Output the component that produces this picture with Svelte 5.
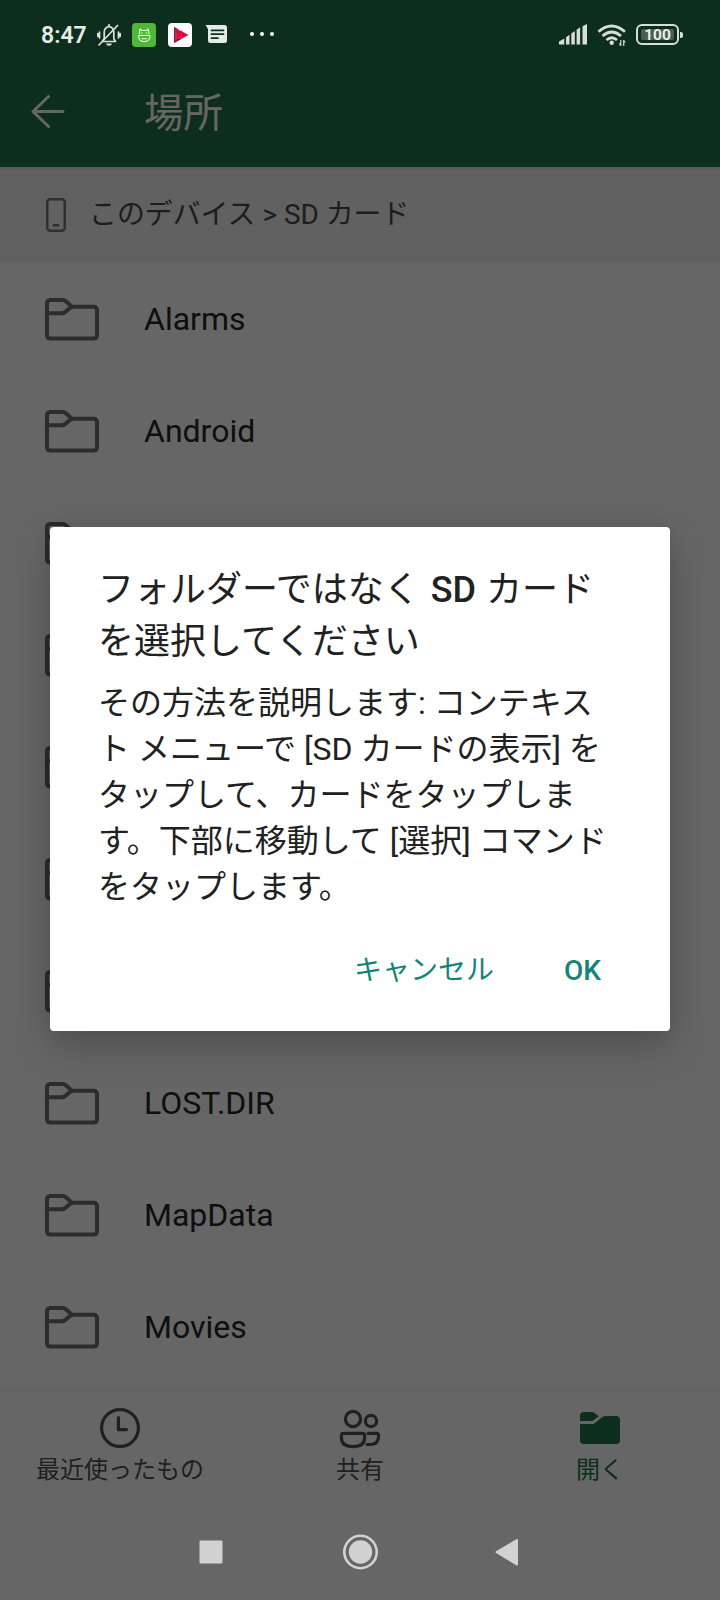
<script lang="ts">
  const folders = [
    "Alarms",
    "Android",
    "Audiobooks",
    "DCIM",
    "Documents",
    "Download",
    "Fonts",
    "LOST.DIR",
    "MapData",
    "Movies",
  ];

  interface Tab {
    key: string;
    label: string;
  }

  const tabs: Tab[] = [
    { key: "recent", label: "最近使ったもの" },
    { key: "shared", label: "共有" },
    { key: "open", label: "開く" },
  ];

  let active = $state("open");
  let dialogOpen = $state(true);
</script>

<div class="screen" lang="ja">
  <header class="app-bar">
    <svg class="back" width="34" height="34" viewBox="0 0 34 34">
      <path d="M32 16.500H2M17.500 1.500L2 16.500l15.500 15" />
    </svg>
    <h1>場所</h1>
  </header>

  <div class="crumbs">
    <svg width="20" height="34" viewBox="0 0 20 34">
      <rect x="1.250" y="1.250" width="17.500" height="31.500" rx="3" />
      <path d="M8 27.300h4" />
    </svg>
    <span>このデバイス &gt; SD カード</span>
  </div>

  <main class="list">
    {#each folders as name}
      <div class="row">
        <svg width="54" height="43" viewBox="0 0 54 43">
          <path d="M5.500 2H18q1.200 0 2.200 .8L27 8.700h21.500q3.500 0 3.500 3.500V37q0 3.500-3.500 3.500h-43Q2 40.500 2 37V5.500Q2 2 5.500 2z" />
          <path d="M2 15.200h16.500L27 8.700" />
        </svg>
        <span>{name}</span>
      </div>
    {/each}
  </main>

  <nav class="tabs">
    {#each tabs as tab}
      <button class="tab" class:active={tab.key === active} onclick={() => (active = tab.key)}>
        <svg width="42" height="42" viewBox="0 0 42 42">
          {#if tab.key === "recent"}
            <circle cx="21" cy="21" r="18.400" />
            <path d="M19.400 10.500v12.200h8" />
          {:else if tab.key === "shared"}
            <circle cx="14" cy="12" r="7.600" />
            <circle cx="32" cy="14" r="5.600" />
            <path d="M4.600 26.400h19q2 0 2 2.300v2q0 8.900-11.600 8.900T2.400 30.700v-2q0-2.300 2.200-2.300z" />
            <path d="M29 26.400h8.400q2.200 0 2.200 2.300 0 8.800-8.600 8.800h-3" />
          {:else}
            <path class="solid" d="M1 9.500Q1 5 5 5h7.500q2 0 3.200 .9l4 3.400-4.400 3.500q-1.400 1.200-3 1.200H1zM1 17h12.500q1.500 0 2.600-.9l6.500-5.500q1.900-1.600 3.900-1.600H37q4 0 4 4v20q0 4-4 4H5q-4 0-4-4z" />
          {/if}
        </svg>
        <span>{tab.label}</span>
      </button>
    {/each}
  </nav>

  <footer class="system-nav">
    <svg width="36" height="36" viewBox="0 0 36 36"><rect x="6.500" y="6.500" width="23" height="23" rx="1" /></svg>
    <svg width="38" height="36" viewBox="0 0 38 36">
      <circle cx="20.500" cy="18" r="11.700" />
      <circle class="ring" cx="20.500" cy="18" r="16.200" />
    </svg>
    <svg width="36" height="36" viewBox="0 0 36 36"><path d="M7 17.200L27.200 5.300q1.800-.9 1.800 .7v24.500q0 1.600-1.800 .7L7 19q-1.200-.9 0-1.800z" /></svg>
  </footer>

  <div class="scrim"></div>

  <div class="status-bar">
    <span class="time">8:47</span>
    <svg class="bell" width="24" height="24" viewBox="0 0 24 24">
      <path d="M5.500 18.500h13l-1.700-3V9.500q0-5-4.800-6-4.800 1-4.800 6v6zM12 3.500V1.500M2.500 9v6M.8 10.500v3M21.500 9v6M23.200 10.500v3" />
      <path d="M2 22L20.500 2.500" />
      <path class="clapper" d="M9 20.500h6q-.5 2.200-3 2.200t-3-2.200z" />
    </svg>
    <svg class="green-app" width="24" height="24" viewBox="0 0 24 24">
      <rect width="24" height="24" rx="4" fill="#50b839" stroke="none" />
      <path d="M7.500 11V8.500L8 6l2 1.500h4.500L16 6l.8 2.500V11M6.500 12.500h11.500v1q-.5 5-5.750 5t-5.750-5z" />
      <path d="M9.700 10h.6M14 10h.6M10 15.700h4.500" />
    </svg>
    <svg class="play-app" width="24" height="24" viewBox="0 0 24 24">
      <rect width="24" height="24" rx="4" fill="#fff" />
      <path d="M6 4l14.500 8L6 20z" fill="#e5093b" />
      <path d="M6 4l4 2.200v2L6 20z" fill="#8e1746" />
      <path d="M6 20l4.500-5.500 4 .8z" fill="#6d2350" />
      <path d="M8 7v9M11 7.500h3M11 15h3" stroke="#f790a5" stroke-width=".7" stroke-dasharray="1 1.500" />
    </svg>
    <svg class="chat" width="23" height="20" viewBox="0 0 23 20">
      <path d="M.5 1H19.500q2.500 0 2.500 2.500v13q0 2.500-2.500 2.500h-14q-2.500 0-2.500-2.500V5z" fill="#e4eae6" />
      <path d="M6.500 6.300h12M6.500 10.200h12M6.500 14.100h6.500" stroke="#0f2e1e" stroke-width="1.800" />
    </svg>
    <svg class="dots" width="26" height="6" viewBox="0 0 26 6">
      <circle cx="3" cy="3" r="2" />
      <circle cx="13" cy="3" r="2" />
      <circle cx="23" cy="3" r="2" />
    </svg>

    <svg class="signal" width="29" height="21" viewBox="0 0 29 21">
      <path d="M0 20.500v-3l5.300-3v6zM7 20.500v-7.200l3.500-2.500v9.700zM12.300 20.500V9.500L15.800 7v13.500zM17.600 20.500V5.700l3.500-2.400v17.200zM23.500 20.500V2.300L28 0v20.500z" />
    </svg>
    <svg class="wifi" width="30" height="23" viewBox="0 0 30 23">
      <path d="M1.500 7.700q13-11.500 26.500 0M5.500 12q9.200-8 18.500 0M9.500 16q5.200-4.500 10.500 0" />
      <circle cx="14.700" cy="18.700" r="2.200" />
      <path class="traffic" d="M23.800 16v6M22.300 19.500l1.500 2M26.700 16v6M28.200 18.500l-1.500-2" />
    </svg>
    <div class="battery"><span>100</span></div>
  </div>

  {#if dialogOpen}
    <div class="dialog" role="dialog" aria-modal="true">
      <h2>フォルダーではなく <b>SD</b> カード<br />を選択してください</h2>
      <p>
        その方法を説明します: コンテキス<br />ト メニューで [SD カードの表示] を<br />タップして、カードをタップしま<br />す。下部に移動して [選択] コマンド<br />をタップします。
      </p>
      <div class="actions">
        <button onclick={() => (dialogOpen = false)}>キャンセル</button>
        <button class="ok" onclick={() => (dialogOpen = false)}>OK</button>
      </div>
    </div>
  {/if}
</div>

<style>
  :global(body) { background: #666; }
  .screen { position: relative; display: flex; flex-direction: column; width: 720px; height: 1600px; overflow: hidden; background: #fff; font-family: Roboto, "Noto Sans CJK JP", sans-serif; }
  svg { display: block; flex: none; fill: none; stroke-linecap: round; stroke-linejoin: round; }
  h1, h2, p { margin: 0; font-weight: 400; }
  button { border: 0; padding: 0; background: none; font: inherit; }

  .app-bar { flex: none; box-sizing: border-box; height: 167px; padding: 56px 0 0 31px; display: flex; align-items: center; gap: 79px; background: #217346; color: #fff; box-shadow: 0 1px 4px rgba(0, 0, 0, 0.15); z-index: 1; }
  .app-bar h1 { padding-top: 5px; font-size: 39.500px; line-height: 58px; }
  .back { stroke: #fff; stroke-width: 3; }

  .crumbs { flex: none; height: 96px; padding-left: 46px; display: flex; align-items: center; gap: 23px; background: #f3f3f3; color: #4a4a4a; font-size: 27.900px; line-height: 40px; }
  .crumbs svg { stroke: #777; stroke-width: 2.500; }

  .list { flex: none; height: 1129px; overflow: hidden; }
  .row { height: 112px; padding-left: 45px; display: flex; align-items: center; gap: 45px; color: #262626; font-size: 32px; }
  .row svg { stroke: #6e6e6e; stroke-width: 4; }

  .tabs { flex: none; height: 112px; display: grid; grid-template-columns: repeat(3, 1fr); background: #fff; box-shadow: 0 -2px 7px rgba(0, 0, 0, 0.06); }
  .tab { display: flex; flex-direction: column; align-items: center; padding-top: 15px; gap: 3px; color: #505050; font-size: 24px; line-height: 36px; white-space: nowrap; }
  .tab svg { stroke: #505050; stroke-width: 3.200; }
  .tab.active { color: #217346; }
  .solid { fill: #217346; stroke: none; }

  .system-nav { position: relative; z-index: 3; box-sizing: border-box; height: 96px; display: flex; align-items: center; justify-content: center; gap: 111px; padding: 0 3px 0 0; background: #666; }
  .system-nav svg { fill: #d2d2d2; }
  .system-nav .ring { fill: none; stroke: #d2d2d2; stroke-width: 2.600; }

  .scrim { position: absolute; inset: 0; z-index: 2; background: rgba(0, 0, 0, 0.6); }

  .status-bar { position: absolute; top: 0; left: 0; right: 0; z-index: 3; box-sizing: border-box; height: 69px; display: flex; align-items: center; padding: 0 41px 0 41px; color: #e6ece8; }
  .time { width: 56px; padding-top: 1px; font-size: 23px; font-weight: 600; }
  .bell { stroke: #dbe2dd; stroke-width: 1.700; }
  .clapper { fill: #dbe2dd; stroke: none; }
  .green-app { margin-left: 11px; stroke: #e9f7e4; stroke-width: 1.100; }
  .play-app { margin-left: 12px; }
  .chat { margin: 0 0 2px 13px; }
  .dots { margin: 0 0 1px 21px; fill: #fff; }
  .signal { margin-left: auto; fill: #d5ded9; }
  .wifi { margin: 2px 9px 0 9px; stroke: #d5ded9; stroke-width: 2.800; stroke-linecap: butt; }
  .wifi circle { fill: #d5ded9; stroke: none; }
  .wifi .traffic { stroke-width: 1.200; }
  .battery { position: relative; box-sizing: border-box; width: 43px; height: 21px; padding: 3px 3px; border: 2px solid #d5ded9; border-radius: 6px; }
  .battery::after { content: ""; position: absolute; left: 42px; top: 5.500px; width: 2.500px; height: 6px; border-radius: 0 2px 2px 0; background: #d5ded9; }
  .battery span { display: block; height: 11px; border-radius: 2px; background: #486052; color: #eef3f0; font-size: 15.500px; line-height: 12px; font-weight: 600; text-align: center; }

  .dialog { position: absolute; left: 50px; top: 527px; z-index: 4; box-sizing: border-box; width: 620px; height: 504px; padding: 37px 49px 0 48px; border-radius: 4px; background: #fff; color: #212121; box-shadow: 0 16px 40px rgba(0, 0, 0, 0.22), 0 0 16px rgba(0, 0, 0, 0.06); }
  .dialog h2 { font-size: 36px; line-height: 52px; white-space: nowrap; }
  .dialog b { margin: 0 1px 0 2px; font-weight: 500; }
  .dialog p { margin-top: 12px; font-size: 32px; line-height: 46px; white-space: nowrap; }
  .actions { margin-top: 39px; padding-right: 20px; display: flex; justify-content: flex-end; align-items: center; gap: 70px; font-size: 28px; line-height: 44px; }
  .actions button { color: #128478; }
  .actions .ok { font-weight: 500; }
</style>
